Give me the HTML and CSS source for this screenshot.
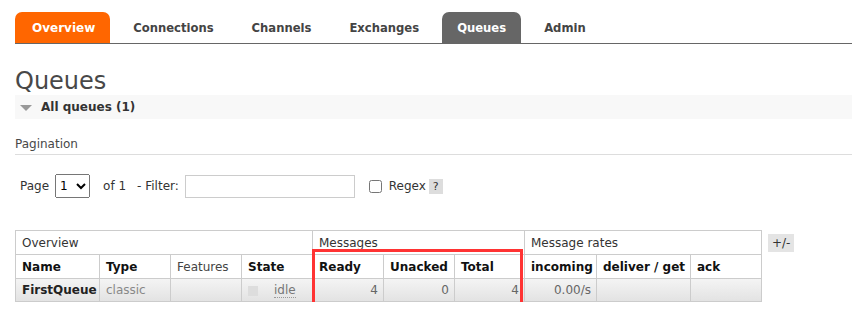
FILE: index.html
```html
<!DOCTYPE html>
<html lang="en">

<head>
    <meta charset="UTF-8">
    <meta name="viewport" content="width=device-width, initial-scale=1.0">
    <title>Queues</title>
    <link rel="stylesheet" href="styles.css">
</head>

<body>
    <div class="Page">
        <ul class="menu">
            <li class="tab orange">Overview</li>
            <li class="tab">Connections</li>
            <li class="tab">Channels</li>
            <li class="tab">Exchanges</li>
            <li class="tab active">Queues</li>
            <li class="tab">Admin</li>
        </ul>
        <h1>Queues</h1>
        <div class="section">
            <span class="arrow"></span>
            <span>All queues (1)</span>
        </div>
        <h3 class="subTitle">Pagination</h3>
        <div class="pager">
            <span>Page</span>
            <select>
                <option selected>1</option>
            </select>
            <span class="of">of 1</span>
            <span>- Filter:</span>
            <input type="text" class="filter">
            <input type="checkbox" class="check">
            <span>Regex</span>
            <span class="help">?</span>
        </div>
        <div class="tableRow">
            <div class="tableWrap">
                <table>
                    <colgroup>
                        <col style="width: 84px">
                        <col style="width: 71px">
                        <col style="width: 71px">
                        <col style="width: 71px">
                        <col style="width: 71px">
                        <col style="width: 71px">
                        <col style="width: 70px">
                        <col style="width: 72px">
                        <col style="width: 94px">
                        <col style="width: 71px">
                    </colgroup>
                    <thead>
                        <tr class="group">
                            <th colspan="4">Overview</th>
                            <th colspan="3">Messages</th>
                            <th colspan="3">Message rates</th>
                        </tr>
                        <tr class="names">
                            <th>Name</th>
                            <th>Type</th>
                            <th class="plain">Features</th>
                            <th>State</th>
                            <th>Ready</th>
                            <th>Unacked</th>
                            <th>Total</th>
                            <th>incoming</th>
                            <th>deliver / get</th>
                            <th>ack</th>
                        </tr>
                    </thead>
                    <tbody>
                        <tr>
                            <td class="name">FirstQueue</td>
                            <td class="grey">classic</td>
                            <td></td>
                            <td><span class="status"></span><span class="idle">idle</span></td>
                            <td class="num">4</td>
                            <td class="num">0</td>
                            <td class="num">4</td>
                            <td class="num">0.00/s</td>
                            <td></td>
                            <td></td>
                        </tr>
                    </tbody>
                </table>
                <div class="mark"></div>
            </div>
            <span class="toggle">+/-</span>
        </div>
    </div>
</body>

</html>
```

FILE: styles.css
```css
*{
    margin: 0px;
    padding: 0px;
    box-sizing: border-box;
}

body {
    font-family: "DejaVu Sans", Verdana, sans-serif;
    font-size: 12px;
    color: #484848;
    background-color: white;
}

.Page {
    padding-left: 15px;
}

.menu {
    display: flex;
    gap: 8px;
    list-style: none;
    margin-top: 12px;
    border-bottom: 1px solid #666;
}

.tab {
    height: 31px;
    padding: 0px 15px;
    display: flex;
    align-items: center;
    font-size: 11.6px;
    font-weight: bold;
    color: #444;
    border-radius: 7px 7px 0px 0px;
}

.tab.orange {
    background-color: #f60;
    color: white;
    padding: 0px 15px 0px 17px;
    font-size: 12px;
}

.tab.active {
    background-color: #666;
    color: white;
}

h1 {
    margin-top: 24px;
    font-size: 24px;
    font-weight: normal;
    color: #484848;
    line-height: 27px;
}

.section {
    height: 24px;
    background-color: #f8f8f8;
    display: flex;
    align-items: center;
    font-weight: bold;
    color: #333;
}

.arrow {
    width: 0px;
    height: 0px;
    margin: 1px 9px 0px 5px;
    border-left: 6px solid transparent;
    border-right: 6px solid transparent;
    border-top: 6px solid #999;
}

.subTitle {
    margin-top: 18px;
    padding-bottom: 3px;
    font-size: 12px;
    font-weight: normal;
    color: #484848;
    border-bottom: 1px solid #ddd;
}

.pager {
    display: flex;
    align-items: center;
    margin-top: 19px;
    padding-left: 5px;
    height: 24px;
    color: #333;
}

.pager select {
    width: 35px;
    height: 24px;
    margin: 0px 13px 0px 6px;
    font-family: inherit;
    font-size: 12px;
}

.of {
    margin-right: 11px;
}

.filter {
    width: 170px;
    height: 23px;
    margin-left: 6px;
    border: 1px solid #ccc;
}

.check {
    width: 13px;
    height: 13px;
    margin: 0px 7px 0px 14px;
}

.help {
    margin-left: 3px;
    padding: 1px 4px;
    background-color: #ddd;
    font-size: 11px;
}

.tableRow {
    display: flex;
    align-items: flex-start;
    margin-top: 32px;
}

.tableWrap {
    position: relative;
}

table {
    table-layout: fixed;
    width: 746px;
    border-collapse: collapse;
}

th,
td {
    height: 24px;
    border: 1px solid #ccc;
    padding: 0px 6px;
    text-align: left;
    white-space: nowrap;
    overflow: hidden;
}

.group th {
    font-weight: normal;
    color: #333;
    height: 24px;
}

.names th {
    font-weight: bold;
    color: #111;
}

.names th.plain {
    font-weight: normal;
    color: #444;
}

tbody tr {
    background: linear-gradient(#f4f4f4, #e2e2e2);
}

td {
    color: #666;
    height: 23px;
}

td.name {
    font-weight: bold;
    color: #222;
}

td.grey {
    color: #888;
}

td.num {
    text-align: right;
    padding-right: 5px;
}

.status {
    display: inline-block;
    width: 10px;
    height: 10px;
    margin-right: 16px;
    background-color: #ddd;
    vertical-align: middle;
}

.idle {
    color: #777;
    border-bottom: 1px dotted #999;
}

.mark {
    position: absolute;
    left: 297px;
    top: 19px;
    width: 211px;
    height: 57px;
    border: 3px solid #f33;
}

.toggle {
    margin: 4px 0px 0px 6px;
    padding: 2px 4px;
    background-color: #e4e4e4;
    color: #333;
}
```
